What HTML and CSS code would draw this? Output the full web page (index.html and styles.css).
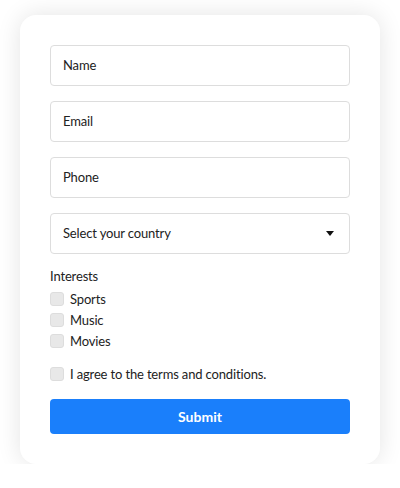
FILE: index.html
```html
<!DOCTYPE html>
<html lang="en">
<head>
  <meta charset="UTF-8">
  <title>Sign up</title>
  <link rel="stylesheet" href="styles.css">
</head>
<body>
  <form class="card">
    <input class="field" type="text" placeholder="Name">
    <input class="field" type="email" placeholder="Email">
    <input class="field" type="tel" placeholder="Phone">
    <div class="select-wrap">
      <select class="field select">
        <option>Select your country</option>
      </select>
    </div>

    <div class="group">
      <div class="group-title">Interests</div>
      <label class="check"><input type="checkbox"> Sports</label>
      <label class="check"><input type="checkbox"> Music</label>
      <label class="check"><input type="checkbox"> Movies</label>
    </div>

    <label class="check agree"><input type="checkbox"> I agree to the terms and conditions.</label>

    <button class="submit" type="button">Submit</button>
  </form>
</body>
</html>
```

FILE: styles.css
```css
body {
  margin: 0;
  padding-top: 15px;
  background: #fff;
  font-family: 'Lato', 'Noto Sans', sans-serif;
  color: #222;
}

.card {
  width: 360px;
  box-sizing: border-box;
  margin: 0 auto;
  padding: 30px;
  border-radius: 16px;
  background: #fff;
  box-shadow: 0 0 24px rgba(0, 0, 0, 0.11);
  display: flex;
  flex-direction: column;
}

.field {
  box-sizing: border-box;
  width: 100%;
  height: 41px;
  margin: 0 0 15px;
  padding: 0 12px 2px;
  border: 1px solid #ddd;
  border-radius: 4px;
  font-family: inherit;
  font-size: 13px;
  letter-spacing: -0.15px;
  color: #222;
  background: #fff;
  outline: none;
}

.field::placeholder {
  color: #222;
}

.select-wrap {
  position: relative;
}

.select {
  appearance: none;
  -webkit-appearance: none;
  margin-bottom: 0;
}

.select-wrap::after {
  content: '';
  position: absolute;
  right: 16px;
  top: 18px;
  border-left: 4px solid transparent;
  border-right: 4px solid transparent;
  border-top: 5px solid #111;
  pointer-events: none;
}

.group {
  margin-top: 13px;
  display: flex;
  flex-direction: column;
  gap: 5px;
}

.group-title {
  font-size: 13px;
  letter-spacing: -0.15px;
  line-height: 18px;
  margin-bottom: 1px;
}

.check {
  display: flex;
  align-items: center;
  gap: 6px;
  font-size: 13px;
  letter-spacing: -0.15px;
  line-height: 16px;
}

.check input {
  appearance: none;
  -webkit-appearance: none;
  width: 14px;
  height: 14px;
  margin: 0;
  border: 1px solid #ddd;
  border-radius: 3px;
  background: #e8e8e8;
}

.agree {
  margin-top: 17px;
}

.submit {
  margin-top: 17px;
  height: 35px;
  border: 0;
  border-radius: 4px;
  background: #1a7ffb;
  color: #fff;
  font-family: inherit;
  font-size: 14px;
  font-weight: bold;
}
```
